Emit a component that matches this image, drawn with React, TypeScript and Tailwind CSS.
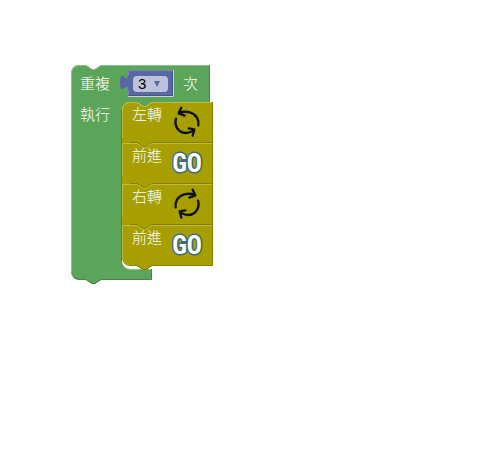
import React from "react";

const labelClass =
  "text-[15px] leading-5 font-light text-white font-['Noto_Sans_CJK_TC','Noto_Sans_CJK_SC',sans-serif]";

function TurnIcon({ mirrored = false }: { mirrored?: boolean }) {
  return (
    <svg
      viewBox="15 18 84 96"
      className={mirrored ? "h-8 w-7 -scale-x-100" : "h-8 w-7"}
      fill="none"
      stroke="#101008"
      strokeWidth="7"
      strokeLinecap="round"
      strokeLinejoin="round"
      aria-hidden="true"
    >
      <path d="M34 39C56 30 78 39 87 53Q93 64 91 76" />
      <path d="M40 23L32 40L50 47" />
      <path d="M24 56C20 70 24 84 36 94Q52 105 76 92" />
      <path d="M62 85L79 88L74 107" />
    </svg>
  );
}

function GoIcon() {
  return (
    <span className="pt-[2px] font-['Liberation_Sans_Narrow','Roboto_Condensed','Open_Sans_Condensed','DejaVu_Sans_Condensed',sans-serif] text-[25px] leading-8 font-bold text-white [-webkit-text-stroke:3px_#3f6b80] [paint-order:stroke_fill]">
      GO
    </span>
  );
}

type CommandProps = {
  label: string;
  position?: "first" | "middle" | "last";
  children: React.ReactNode;
};

function Command({ label, position = "middle", children }: CommandProps) {
  const top = position === "first" ? "M0 8A8 8 0 0 1 8 0" : "M0 0";
  const bottom = position === "last" ? "H8A8 8 0 0 1 0 33Z" : "H0Z";
  return (
    <li className="relative flex h-[41px] items-start pl-[10px]">
      <svg
        viewBox="0 0 91 46"
        className="absolute top-0 left-0 h-[46px] w-[91px]"
        aria-hidden="true"
      >
        <path
          d={`${top}H15L21 4H24L30 0H91V41H30L24 45H21L15 41${bottom}`}
          fill="#a79f00"
        />
        <path d="M90.5 0V40.5H30L24 44.5H21L15 40.5H8" fill="none" stroke="#847d00" />
        <path
          d={position === "first" ? "M.5 36V8A7.5 7.5 0 0 1 8 .5H15L21 4.5H24L30 .5H90" : "M.5 33V.5H15L21 4.5H24L30 .5H90"}
          fill="none"
          stroke="#c1bb40"
        />
      </svg>
      <span className={`${labelClass} relative w-[39px] pt-[2px]`}>{label}</span>
      <span className="relative flex h-10 w-8 items-center justify-center">{children}</span>
    </li>
  );
}

function CountBlock() {
  return (
    <div className="relative flex h-[27px] w-[46px] items-center pl-[5px]">
      <svg
        viewBox="-9 -1 56 29"
        className="absolute -top-px -left-[9px] h-[29px] w-14"
        aria-hidden="true"
      >
        <path
          d="M0 0H46V27H0V20C0 10-8 28-8 12.500S0 15 0 5Z"
          fill="#5b67a5"
        />
        <path d="M0 26.500H45.500V0" fill="none" stroke="#c9d4d4" />
        <path d="M1 25.500H44.500V1" fill="none" stroke="#49528b" />
        <path
          d="M.5 25V20M.5 5V.5H45"
          fill="none"
          stroke="#7c86b8"
        />
      </svg>
      <select
        aria-label="重複次數"
        defaultValue="3"
        className="relative h-4 w-[35px] appearance-none rounded-[4px] bg-[#bdc2db] pl-[5px] font-['Liberation_Sans',sans-serif] text-[15px] leading-4 text-black"
      >
        <option>1</option>
        <option>2</option>
        <option>3</option>
        <option>4</option>
      </select>
      <svg
        viewBox="0 0 6 6"
        className="pointer-events-none absolute top-[11px] left-[26px] size-[6px]"
        aria-hidden="true"
      >
        <path d="M0 0H6L3 6Z" fill="#5b67a5" />
      </svg>
    </div>
  );
}

function RepeatBlock() {
  return (
    <section className="absolute top-[65px] left-[71px] w-[142px]">
      <svg
        viewBox="0 0 142 219"
        className="absolute top-0 left-0 h-[219px] w-[142px]"
        aria-hidden="true"
      >
        <path
          d="M0 8A8 8 0 0 1 8 0H15L21 4H24L30 0H139V37H81L75 41H72L66 37H59A8 8 0 0 0 51 45V196A8 8 0 0 0 59 204H81V215H30L24 219H21L15 215H8A8 8 0 0 1 0 207Z"
          fill="#5ba55b"
        />
        <path
          d="M138.500 1V36.500M59 204.500H80.500V214.500H30L24 218.500H21L15 214.500H8L3 212M50.500 196V45"
          fill="none"
          stroke="#498449"
        />
        <path
          d="M.5 207V8A7.500 7.500 0 0 1 8 .5H15L21 4.500H24L30 .5H138M53 202A8 8 0 0 0 59 204.500H80"
          fill="none"
          stroke="#8cc08c"
        />
      </svg>
      <div className="relative flex h-[37px] items-center pl-[9px]">
        <span className={`${labelClass} w-12 pb-[2px]`}>重複</span>
        <CountBlock />
        <span className={`${labelClass} ml-[9px] pb-[2px]`}>次</span>
      </div>
      <div className="relative flex pl-[9px]">
        <span className={`${labelClass} w-[42px] pt-[2px]`}>執行</span>
        <ul className="w-[91px]">
          <Command label="左轉" position="first">
            <TurnIcon />
          </Command>
          <Command label="前進">
            <GoIcon />
          </Command>
          <Command label="右轉">
            <TurnIcon mirrored />
          </Command>
          <Command label="前進" position="last">
            <GoIcon />
          </Command>
        </ul>
      </div>
    </section>
  );
}

export default function App() {
  return (
    <main className="relative min-h-screen w-full bg-white">
      <RepeatBlock />
    </main>
  );
}
